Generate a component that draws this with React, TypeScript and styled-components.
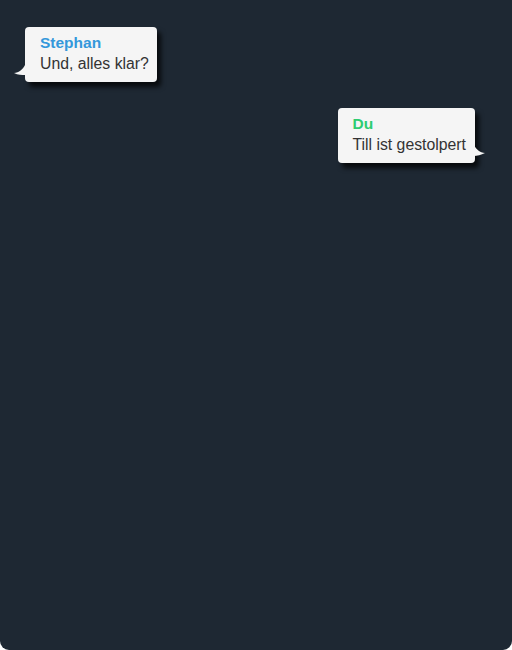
import React from "react";
import styled, { createGlobalStyle } from "styled-components";

const Global = createGlobalStyle`
  html, body { margin: 0; padding: 0; background: #ffffff; }
  body { font-family: "Liberation Sans", Arial, sans-serif; }
`;

const Screen = styled.div`
  width: 512px;
  height: 650px;
  box-sizing: border-box;
  background: #1e2833;
  border-radius: 0 0 9px 9px;
  padding: 27px 37px 0 25px;
  display: flex;
  flex-direction: column;
  gap: 26px;
`;

const Bubble = styled.div<{ $mine?: boolean }>`
  position: relative;
  align-self: ${(p) => (p.$mine ? "flex-end" : "flex-start")};
  background: #f5f5f5;
  border-radius: 4px;
  padding: 6px 8px 9px 15px;
  padding-left: ${(p) => (p.$mine ? "14px" : "15px")};
  padding-right: ${(p) => (p.$mine ? "9px" : "8px")};
  box-shadow: 4px 5px 5px rgba(0, 0, 0, 0.75);
  font-size: 15.8px;
  line-height: 19px;
`;

const Name = styled.div<{ $mine?: boolean }>`
  font-weight: bold;
  font-size: 15.5px;
  color: ${(p) => (p.$mine ? "#2ecc71" : "#3498db")};
  margin-bottom: 2px;
`;

const Text = styled.div`
  color: #333333;
`;

const Tail = styled.svg<{ $mine?: boolean }>`
  position: absolute;
  bottom: 6px;
  width: 12px;
  height: 12px;
  ${(p) => (p.$mine ? "right: -11px;" : "left: -12px;")}
`;

export default function App() {
  return (
    <>
      <Global />
      <Screen>
        <Bubble>
          <Tail viewBox="0 0 12 12">
            <path d="M12 1 C10 5 6 9 1 9 C5 11 9 11 12 11 Z" fill="#f5f5f5" />
          </Tail>
          <Name>Stephan</Name>
          <Text>Und, alles klar?</Text>
        </Bubble>
        <Bubble $mine>
          <Tail $mine viewBox="0 0 12 12">
            <path d="M0 0 C2 4 6 8 11 8 C7 10 3 11 0 11 Z" fill="#f5f5f5" />
          </Tail>
          <Name $mine>Du</Name>
          <Text>Till ist gestolpert</Text>
        </Bubble>
      </Screen>
    </>
  );
}
